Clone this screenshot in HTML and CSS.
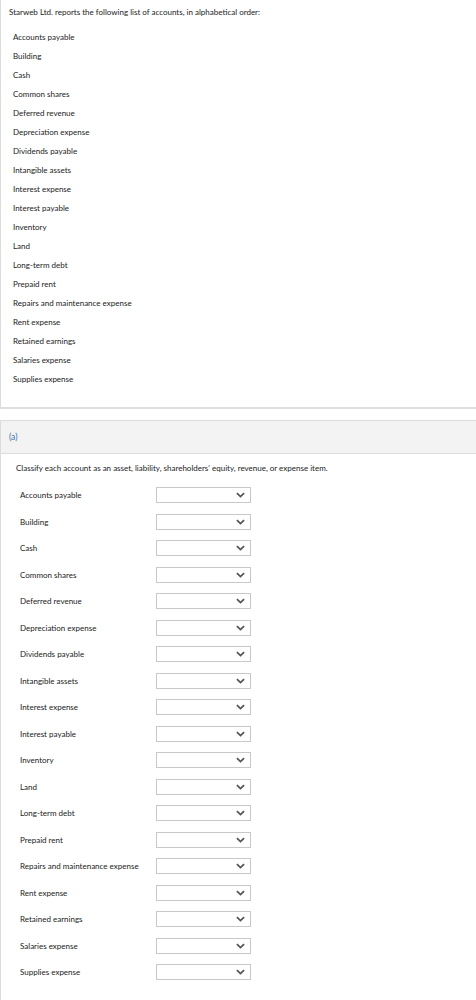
FILE: index.html
```html
<!DOCTYPE html>
<html>
<head>
<meta charset="utf-8">
<link rel="stylesheet" href="styles.css">
</head>
<body>
<div class="intro-box">
  <p class="intro">Starweb Ltd. reports the following list of accounts, in alphabetical order:</p>
  <ul class="accounts">
    <li>Accounts payable</li>
    <li>Building</li>
    <li>Cash</li>
    <li>Common shares</li>
    <li>Deferred revenue</li>
    <li>Depreciation expense</li>
    <li>Dividends payable</li>
    <li>Intangible assets</li>
    <li>Interest expense</li>
    <li>Interest payable</li>
    <li>Inventory</li>
    <li>Land</li>
    <li>Long-term debt</li>
    <li>Prepaid rent</li>
    <li>Repairs and maintenance expense</li>
    <li>Rent expense</li>
    <li>Retained earnings</li>
    <li>Salaries expense</li>
    <li>Supplies expense</li>
  </ul>
</div>

<div class="part">
  <div class="part-head">(a)</div>
  <div class="part-body">
    <p class="instr">Classify each account as an asset, liability, shareholders' equity, revenue, or expense item.</p>
    <div class="rows">
      <div class="row"><span class="lbl">Accounts payable</span><div class="sel"><svg class="chev" viewBox="0 0 10 6"><path d="M1 1 L5 4.8 L9 1"/></svg></div></div>
      <div class="row"><span class="lbl">Building</span><div class="sel"><svg class="chev" viewBox="0 0 10 6"><path d="M1 1 L5 4.8 L9 1"/></svg></div></div>
      <div class="row"><span class="lbl">Cash</span><div class="sel"><svg class="chev" viewBox="0 0 10 6"><path d="M1 1 L5 4.8 L9 1"/></svg></div></div>
      <div class="row"><span class="lbl">Common shares</span><div class="sel"><svg class="chev" viewBox="0 0 10 6"><path d="M1 1 L5 4.8 L9 1"/></svg></div></div>
      <div class="row"><span class="lbl">Deferred revenue</span><div class="sel"><svg class="chev" viewBox="0 0 10 6"><path d="M1 1 L5 4.8 L9 1"/></svg></div></div>
      <div class="row"><span class="lbl">Depreciation expense</span><div class="sel"><svg class="chev" viewBox="0 0 10 6"><path d="M1 1 L5 4.8 L9 1"/></svg></div></div>
      <div class="row"><span class="lbl">Dividends payable</span><div class="sel"><svg class="chev" viewBox="0 0 10 6"><path d="M1 1 L5 4.8 L9 1"/></svg></div></div>
      <div class="row"><span class="lbl">Intangible assets</span><div class="sel"><svg class="chev" viewBox="0 0 10 6"><path d="M1 1 L5 4.8 L9 1"/></svg></div></div>
      <div class="row"><span class="lbl">Interest expense</span><div class="sel"><svg class="chev" viewBox="0 0 10 6"><path d="M1 1 L5 4.8 L9 1"/></svg></div></div>
      <div class="row"><span class="lbl">Interest payable</span><div class="sel"><svg class="chev" viewBox="0 0 10 6"><path d="M1 1 L5 4.8 L9 1"/></svg></div></div>
      <div class="row"><span class="lbl">Inventory</span><div class="sel"><svg class="chev" viewBox="0 0 10 6"><path d="M1 1 L5 4.8 L9 1"/></svg></div></div>
      <div class="row"><span class="lbl">Land</span><div class="sel"><svg class="chev" viewBox="0 0 10 6"><path d="M1 1 L5 4.8 L9 1"/></svg></div></div>
      <div class="row"><span class="lbl">Long-term debt</span><div class="sel"><svg class="chev" viewBox="0 0 10 6"><path d="M1 1 L5 4.8 L9 1"/></svg></div></div>
      <div class="row"><span class="lbl">Prepaid rent</span><div class="sel"><svg class="chev" viewBox="0 0 10 6"><path d="M1 1 L5 4.8 L9 1"/></svg></div></div>
      <div class="row"><span class="lbl">Repairs and maintenance expense</span><div class="sel"><svg class="chev" viewBox="0 0 10 6"><path d="M1 1 L5 4.8 L9 1"/></svg></div></div>
      <div class="row"><span class="lbl">Rent expense</span><div class="sel"><svg class="chev" viewBox="0 0 10 6"><path d="M1 1 L5 4.8 L9 1"/></svg></div></div>
      <div class="row"><span class="lbl">Retained earnings</span><div class="sel"><svg class="chev" viewBox="0 0 10 6"><path d="M1 1 L5 4.8 L9 1"/></svg></div></div>
      <div class="row"><span class="lbl">Salaries expense</span><div class="sel"><svg class="chev" viewBox="0 0 10 6"><path d="M1 1 L5 4.8 L9 1"/></svg></div></div>
      <div class="row"><span class="lbl">Supplies expense</span><div class="sel"><svg class="chev" viewBox="0 0 10 6"><path d="M1 1 L5 4.8 L9 1"/></svg></div></div>
    </div>
  </div>
</div>
</body>
</html>
```
FILE: styles.css
```css
html, body {
  margin: 0;
  padding: 0;
  background: #fff;
}
body {
  font-family: Lato, "Open Sans", sans-serif;
  font-size: 8px;
  color: #222;
}
.intro-box {
  border-left: 1px solid #dcdcdc;
  border-bottom: 2px solid #dedede;
  padding: 8px 0 18px 0;
}
.intro {
  margin: 0 0 0 8px;
  line-height: 9px;
}
.accounts {
  list-style: none;
  margin: 11px 0 0 0;
  padding: 0 0 0 12px;
}
.accounts li {
  line-height: 19px;
}
.part {
  margin-top: 11px;
  border-top: 1px solid #dcdcdc;
  border-left: 1px solid #dcdcdc;
}
.part-head {
  background: #f3f3f3;
  height: 32px;
  line-height: 32px;
  padding-left: 8px;
  color: #3a72ad;
  font-size: 8.5px;
  border-bottom: 1px solid #dcdcdc;
}
.part-body {
  padding: 10px 0 20px 15px;
}
.instr {
  margin: 0;
  line-height: 9px;
}
.rows {
  margin-top: 14px;
  display: flex;
  flex-direction: column;
  gap: 10.5px;
}
.row {
  display: flex;
  align-items: center;
  height: 16px;
}
.lbl {
  width: 140px;
  padding-left: 4px;
  box-sizing: border-box;
}
.sel {
  width: 95px;
  height: 16px;
  box-sizing: border-box;
  border: 1px solid #c8c8c8;
  background: #fff;
  display: flex;
  align-items: center;
  justify-content: flex-end;
  padding-right: 5px;
}
.chev {
  width: 9px;
  height: 6px;
  fill: none;
  stroke: #555;
  stroke-width: 2;
}
```
